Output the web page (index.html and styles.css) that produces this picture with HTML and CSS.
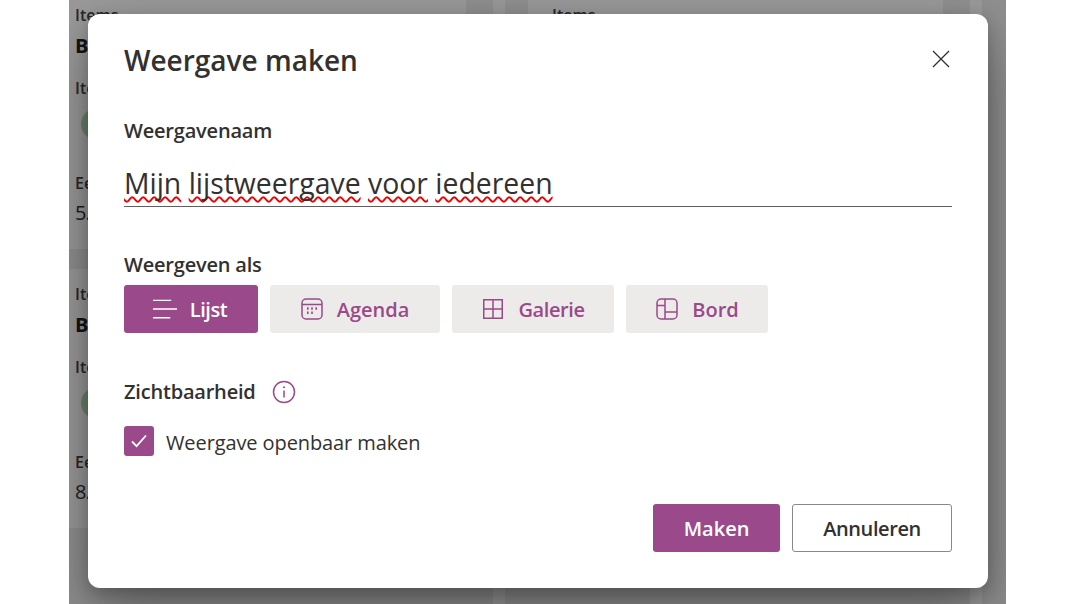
FILE: index.html
```html
<!DOCTYPE html>
<html lang="nl">
<head>
  <meta charset="UTF-8" />
  <meta name="viewport" content="width=device-width, initial-scale=1" />
  <title>Weergave maken</title>
  <link rel="stylesheet" href="styles.css">
</head>
<body>
  <div class="stage">
    <div class="columns">
      <div class="column column-left">
        <div class="card card-first">
          <div class="field-label">Items</div>
          <div class="field-title">B</div>
          <div class="field-label field-gap">Ite</div>
          <div class="avatar"></div>
          <div class="field-label field-gap">Ee</div>
          <div class="field-value">5.</div>
        </div>
        <div class="card card-second">
          <div class="field-label">Ite</div>
          <div class="field-title">B</div>
          <div class="field-label field-gap">Ite</div>
          <div class="avatar"></div>
          <div class="field-label field-gap">Ee</div>
          <div class="field-value">8.</div>
        </div>
      </div>
      <div class="column-strip"></div>
      <div class="column column-right">
        <div class="card card-tall">
          <div class="field-label">Items</div>
        </div>
      </div>
      <div class="column-strip"></div>
    </div>

    <div class="overlay">
      <div class="dialog">
        <div class="dialog-head">
          <h1>Weergave maken</h1>
          <svg class="close-icon" viewBox="0 0 18 18">
            <path d="M1 1l16 16M17 1L1 17" />
          </svg>
        </div>

        <div class="label name-label">Weergavenaam</div>
        <div class="name-input">
          <span class="typo">Mijn</span> <span class="typo">lijstweergave</span> <span class="typo">voor</span> <span class="typo">iedereen</span>
        </div>

        <div class="label show-label">Weergeven als</div>
        <div class="view-buttons">
          <button class="view-btn view-list active">
            <svg viewBox="0 0 26 22"><path d="M1 2h19M1 11h25M1 20h18" /></svg>
            Lijst
          </button>
          <button class="view-btn view-agenda">
            <svg viewBox="0 0 22 22">
              <rect x="1" y="1" width="20" height="20" rx="4" />
              <path d="M1 6.5h20" />
              <path class="dots" d="M6 10.5h1.6M10.2 10.5h1.6M14.4 10.5h1.6M6 14.8h1.6M10.2 14.8h1.6" />
            </svg>
            Agenda
          </button>
          <button class="view-btn view-gallery">
            <svg viewBox="0 0 20 20"><path d="M.75.75h18.5v18.5H.75zM10 .75v18.5M.75 10h18.5" /></svg>
            Galerie
          </button>
          <button class="view-btn view-board">
            <svg viewBox="0 0 22 22">
              <rect x="1" y="1" width="20" height="20" rx="4" />
              <path d="M1 7.5h8M9 1v20M9 14h12" />
            </svg>
            Bord
          </button>
        </div>

        <div class="visibility">
          <span class="label">Zichtbaarheid</span>
          <svg class="info-icon" viewBox="0 0 24 24">
            <circle cx="12" cy="12" r="10.5" />
            <path d="M12 10.5v7" />
            <circle class="info-dot" cx="12" cy="7.2" r="1" />
          </svg>
        </div>

        <label class="public-check">
          <span class="checkbox">
            <svg viewBox="0 0 16 14"><path d="M1 7.5l4.6 4.6L15 1.5" /></svg>
          </span>
          <span class="check-text">Weergave openbaar maken</span>
        </label>

        <div class="dialog-actions">
          <button class="btn-primary">Maken</button>
          <button class="btn-default">Annuleren</button>
        </div>
      </div>
    </div>
  </div>
</body>
</html>
```

FILE: styles.css
```css
* {
  box-sizing: border-box;
}

html,
body {
  height: 100%;
}

body {
  margin: 0;
  background-color: #fff;
  font-family: "Open Sans", "Noto Sans", Arial, sans-serif;
  color: #323130;
  overflow: hidden;
}

.stage {
  position: relative;
  width: 937px;
  height: 604px;
  margin-left: 69px;
  overflow: hidden;
}

.columns {
  display: flex;
  height: 100%;
  background-color: #eee;
}

.column-left {
  width: 397px;
  flex-shrink: 0;
}

.column-right {
  width: 415px;
  flex-shrink: 0;
  margin-left: 23px;
}

.column-strip {
  width: 12px;
  flex-shrink: 0;
  margin-left: 27px;
  background-color: #fff;
}

.card {
  display: flex;
  flex-direction: column;
  padding: 0 6px;
  background-color: #fff;
}

.card-first {
  height: 249px;
  justify-content: flex-end;
  padding-bottom: 22px;
  margin-bottom: 20px;
}

.card-second {
  height: 259px;
  justify-content: flex-end;
  padding-bottom: 22px;
}

.card-tall {
  height: 528px;
  padding: 4px 24px 0;
}

.field-label {
  font-size: 16px;
  font-weight: 600;
  line-height: 22px;
  color: #444;
}

.field-title {
  font-size: 20px;
  font-weight: 700;
  line-height: 30px;
  margin-top: 5px;
  color: #222;
}

.field-value {
  font-size: 20px;
  line-height: 28px;
  margin-top: 5px;
  letter-spacing: -1px;
  color: #333;
}

.field-gap {
  margin-top: 16px;
}

.avatar {
  width: 32px;
  height: 32px;
  margin: 9px 0 16px 6px;
  border-radius: 50%;
  background-color: #b5dcb3;
}

.overlay {
  position: absolute;
  inset: 0;
  display: flex;
  align-items: center;
  justify-content: center;
  padding-left: 1px;
  background-color: rgba(0, 0, 0, 0.4);
}

.dialog {
  width: 900px;
  height: 574px;
  margin-top: -2px;
  padding: 26px 36px 0;
  background-color: #fff;
  border-radius: 12px;
  box-shadow: 0 26px 58px rgba(0, 0, 0, 0.35), 0 5px 15px rgba(0, 0, 0, 0.2);
}

.dialog-head {
  display: flex;
  align-items: center;
  justify-content: space-between;
  height: 40px;
}

h1 {
  margin: 0;
  font-size: 28px;
  font-weight: 600;
}

.close-icon {
  width: 18px;
  height: 18px;
  margin: -2px 2px 0 0;
  fill: none;
  stroke: #323130;
  stroke-width: 1.3;
}

.label {
  font-size: 20px;
  font-weight: 600;
  line-height: 28px;
  letter-spacing: -0.2px;
}

.name-label {
  margin-top: 37px;
}

.name-input {
  height: 44px;
  margin-top: 18px;
  border-bottom: 1px solid #605e5c;
  font-size: 28.4px;
  line-height: 40px;
}

.typo {
  text-decoration: underline wavy #f00000 1.5px;
  text-decoration-skip-ink: none;
  text-underline-offset: 2px;
}

.show-label {
  margin-top: 44px;
}

.view-buttons {
  display: flex;
  gap: 12px;
  margin-top: 6px;
}

button {
  font-family: inherit;
  cursor: pointer;
}

.view-btn {
  display: flex;
  align-items: center;
  justify-content: center;
  height: 48px;
  gap: 14px;
  padding: 0;
  border: none;
  border-radius: 3px;
  background-color: #edebe9;
  color: #9a4a8a;
  font-size: 20px;
  font-weight: 600;
}

.view-btn svg {
  fill: none;
  stroke: currentColor;
  stroke-width: 1.5;
  flex-shrink: 0;
}

.view-btn svg .dots {
  stroke-width: 2.4;
}

.view-list {
  width: 134px;
  gap: 13px;
  padding-right: 3px;
  letter-spacing: -0.4px;
}

.view-list svg {
  width: 25px;
  height: 22px;
}

.view-agenda {
  width: 170px;
}

.view-agenda svg,
.view-board svg {
  width: 22px;
  height: 22px;
}

.view-gallery {
  width: 162px;
  gap: 15px;
  padding-right: 0;
  padding-left: 2px;
  letter-spacing: -0.4px;
}

.view-gallery svg {
  width: 20px;
  height: 20px;
}

.view-board {
  width: 142px;
  padding-left: 1px;
}

.view-btn.active {
  background-color: #9a4a8a;
  color: #fff;
}

.visibility {
  display: flex;
  align-items: center;
  gap: 16px;
  margin-top: 45px;
}

.info-icon {
  width: 24px;
  height: 24px;
  fill: none;
  stroke: #9a4a8a;
  stroke-width: 1.5;
}

.info-dot {
  fill: #9a4a8a;
  stroke: none;
}

.public-check {
  display: flex;
  align-items: center;
  gap: 12px;
  margin-top: 20px;
  font-size: 20px;
  line-height: 30px;
  letter-spacing: -0.1px;
}

.check-text {
  margin: 2px 0 -2px;
}

.checkbox {
  display: flex;
  align-items: center;
  justify-content: center;
  width: 30px;
  height: 30px;
  border-radius: 3px;
  background-color: #9a4a8a;
}

.checkbox svg {
  width: 16px;
  height: 14px;
  fill: none;
  stroke: #fff;
  stroke-width: 1.8;
}

.dialog-actions {
  display: flex;
  justify-content: flex-end;
  gap: 12px;
  margin-top: 48px;
}

.dialog-actions button {
  height: 48px;
  border-radius: 3px;
  font-size: 20px;
  font-weight: 600;
}

.btn-primary {
  width: 127px;
  border: none;
  background-color: #9a4a8a;
  color: #fff;
}

.btn-default {
  width: 160px;
  border: 1px solid #8a8886;
  background-color: #fff;
  color: #323130;
  letter-spacing: -0.4px;
}
```
